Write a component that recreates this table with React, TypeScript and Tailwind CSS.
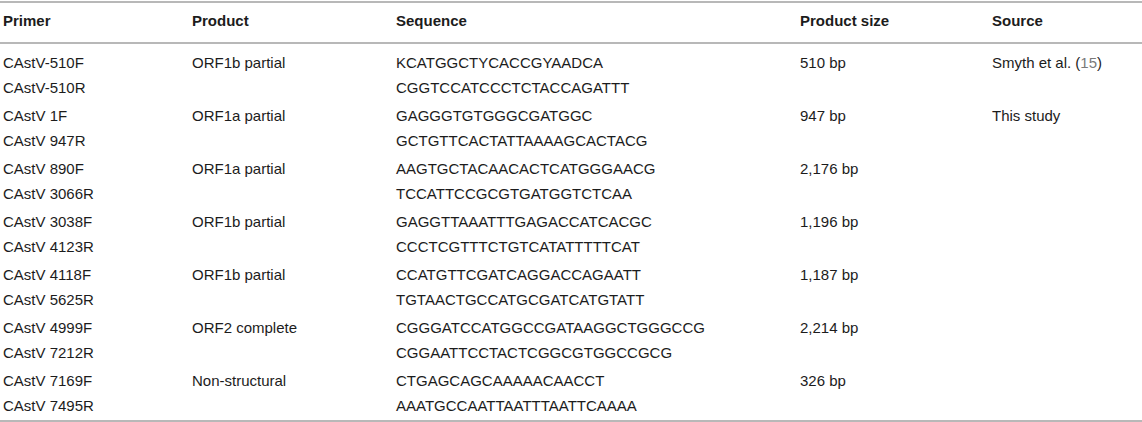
import React from 'react';

interface PrimerRow {
  primers: [string, string];
  product: string;
  sequences: [string, string];
  size: string;
  source?: React.ReactNode;
}

const rows: PrimerRow[] = [
  {
    primers: ['CAstV-510F', 'CAstV-510R'],
    product: 'ORF1b partial',
    sequences: ['KCATGGCTYCACCGYAADCA', 'CGGTCCATCCCTCTACCAGATTT'],
    size: '510 bp',
    source: (
      <>
        Smyth et al. (<span className="text-[#7a7a7a]">15</span>)
      </>
    ),
  },
  {
    primers: ['CAstV 1F', 'CAstV 947R'],
    product: 'ORF1a partial',
    sequences: ['GAGGGTGTGGGCGATGGC', 'GCTGTTCACTATTAAAAGCACTACG'],
    size: '947 bp',
    source: 'This study',
  },
  {
    primers: ['CAstV 890F', 'CAstV 3066R'],
    product: 'ORF1a partial',
    sequences: ['AAGTGCTACAACACTCATGGGAACG', 'TCCATTCCGCGTGATGGTCTCAA'],
    size: '2,176 bp',
  },
  {
    primers: ['CAstV 3038F', 'CAstV 4123R'],
    product: 'ORF1b partial',
    sequences: ['GAGGTTAAATTTGAGACCATCACGC', 'CCCTCGTTTCTGTCATATTTTTCAT'],
    size: '1,196 bp',
  },
  {
    primers: ['CAstV 4118F', 'CAstV 5625R'],
    product: 'ORF1b partial',
    sequences: ['CCATGTTCGATCAGGACCAGAATT', 'TGTAACTGCCATGCGATCATGTATT'],
    size: '1,187 bp',
  },
  {
    primers: ['CAstV 4999F', 'CAstV 7212R'],
    product: 'ORF2 complete',
    sequences: ['CGGGATCCATGGCCGATAAGGCTGGGCCG', 'CGGAATTCCTACTCGGCGTGGCCGCG'],
    size: '2,214 bp',
  },
  {
    primers: ['CAstV 7169F', 'CAstV 7495R'],
    product: 'Non-structural',
    sequences: ['CTGAGCAGCAAAAACAACCT', 'AAATGCCAATTAATTTAATTCAAAA'],
    size: '326 bp',
  },
];

const cols = 'grid grid-cols-[189px_204px_404px_192px_1fr] pl-[3px]';

export default function App() {
  return (
    <div className="w-[1142px] h-[422px] bg-white pt-[1px] font-['Liberation_Sans',Arial,sans-serif] text-[15px] text-[#1c1c1c]">
      <div className="border-t-2 border-b-2 border-[#b8b8b8]">
        <div className={`${cols} h-[41px] pb-[2px] items-center font-bold border-b-2 border-[#b8b8b8]`}>
          <div>Primer</div>
          <div>Product</div>
          <div>Sequence</div>
          <div>Product size</div>
          <div>Source</div>
        </div>
        <div className="pt-[5px]">
          {rows.map((row) => (
            <div key={row.primers[0]} className={`${cols} pt-[1px] pb-[2px] leading-[25px]`}>
              <div>
                <div>{row.primers[0]}</div>
                <div>{row.primers[1]}</div>
              </div>
              <div>{row.product}</div>
              <div>
                <div>{row.sequences[0]}</div>
                <div>{row.sequences[1]}</div>
              </div>
              <div>{row.size}</div>
              <div>{row.source}</div>
            </div>
          ))}
        </div>
      </div>
    </div>
  );
}
